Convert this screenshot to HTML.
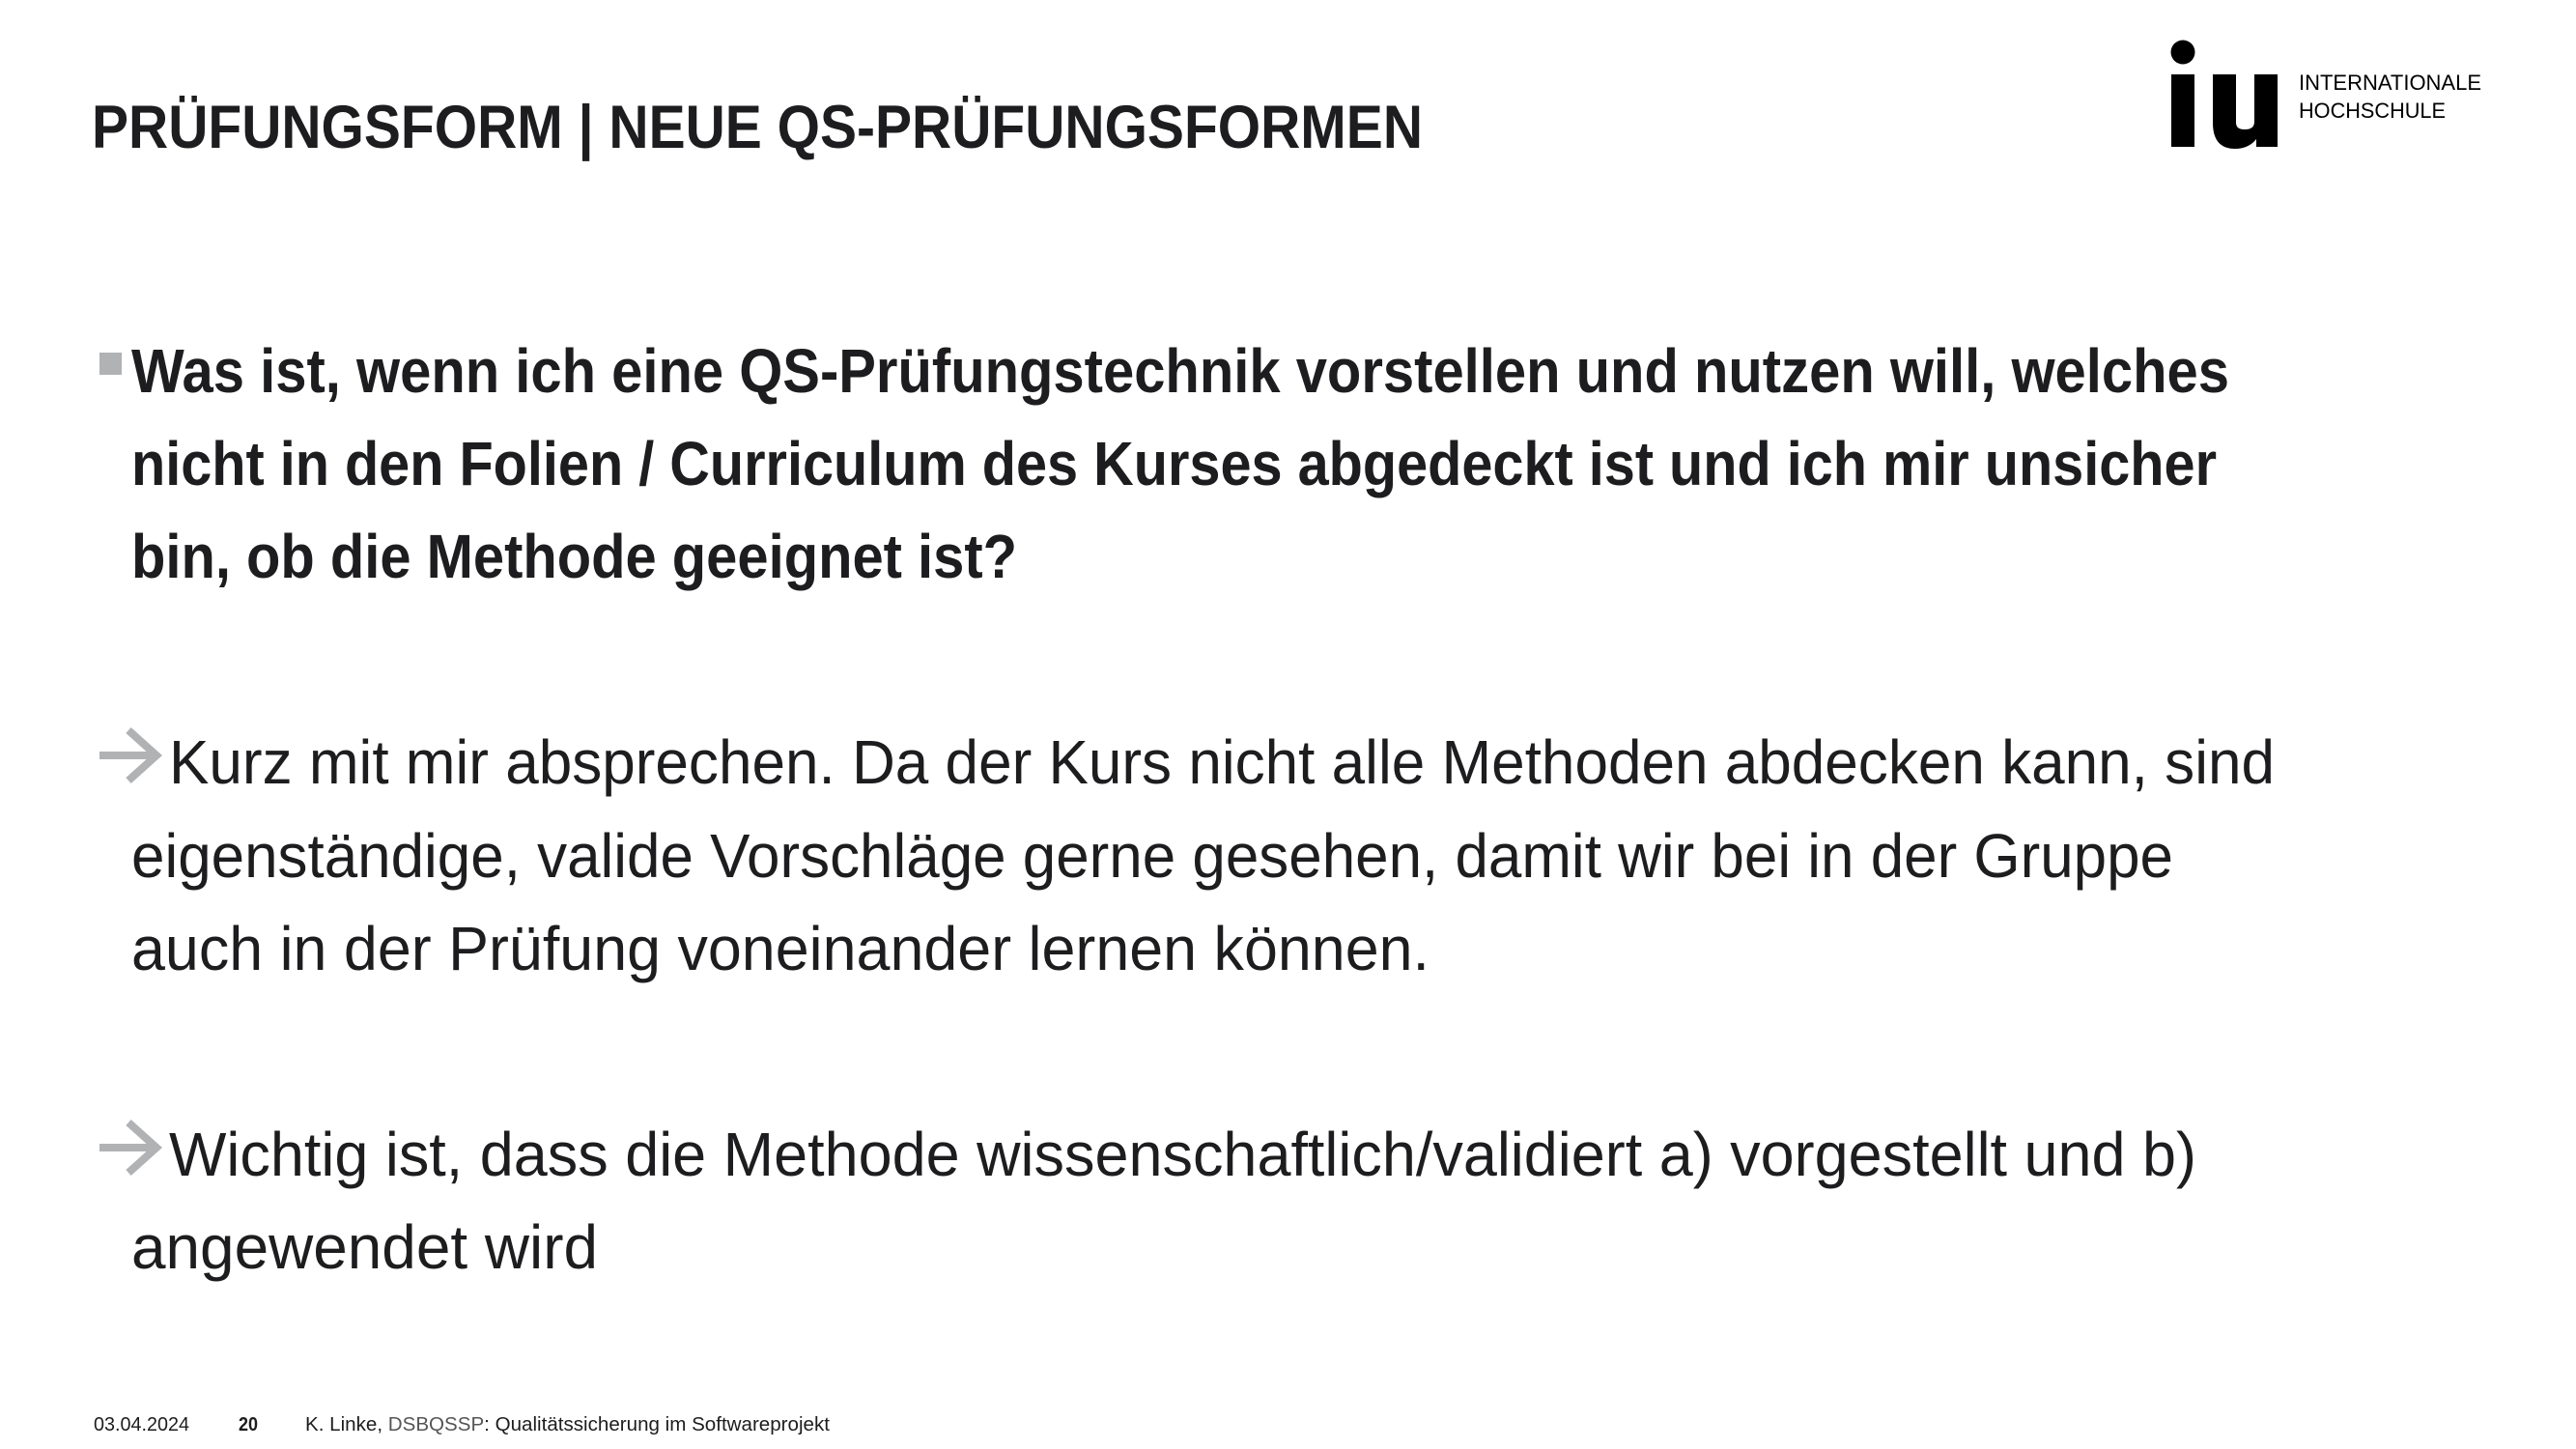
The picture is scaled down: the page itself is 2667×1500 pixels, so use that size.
<!DOCTYPE html>
<html><head><meta charset="utf-8"><style>
html,body{margin:0;padding:0;background:#fff;}
svg{display:block;}
text{font-family:"Liberation Sans",sans-serif;fill:#1d1d1f;}
</style></head><body>
<svg width="2667" height="1500" viewBox="0 0 2667 1500" xmlns="http://www.w3.org/2000/svg">
<rect width="2667" height="1500" fill="#fff"/>
<text x="95" y="153" font-size="63" font-weight="bold" textLength="1378" lengthAdjust="spacingAndGlyphs">PRÜFUNGSFORM | NEUE QS-PRÜFUNGSFORMEN</text>

<!-- logo -->
<circle cx="2260" cy="54" r="12.5" fill="#000"/>
<rect x="2248" y="77" width="24" height="75" fill="#000"/>
<path d="M2291 77 h24 v50 q0 7 9 7 q10 0 10 -8 v-49 h24 v75 h-22 v-8 q-8 10 -22 10 q-23 0 -23 -27 z" fill="#000"/>
<text x="2380" y="93" font-size="22" textLength="189" lengthAdjust="spacingAndGlyphs" style="fill:#000">INTERNATIONALE</text>
<text x="2380" y="122" font-size="22" textLength="152" lengthAdjust="spacingAndGlyphs" style="fill:#000">HOCHSCHULE</text>

<!-- bullet -->
<rect x="103" y="365" width="23" height="23" fill="#b0b2b4"/>
<text x="136" y="406" font-size="64" font-weight="bold" textLength="2172" lengthAdjust="spacingAndGlyphs">Was ist, wenn ich eine QS-Prüfungstechnik vorstellen und nutzen will, welches</text>
<text x="136" y="502" font-size="64" font-weight="bold" textLength="2159" lengthAdjust="spacingAndGlyphs">nicht in den Folien / Curriculum des Kurses abgedeckt ist und ich mir unsicher</text>
<text x="136" y="598" font-size="64" font-weight="bold" textLength="917" lengthAdjust="spacingAndGlyphs">bin, ob die Methode geeignet ist?</text>

<!-- arrow 1 -->
<g stroke="#b0b2b4" stroke-width="8" fill="none">
<path d="M103 782 H160"/>
<path d="M133 756 L162 782 L133 808"/>
</g>
<text x="175" y="811" font-size="64" textLength="2180" lengthAdjust="spacingAndGlyphs">Kurz mit mir absprechen. Da der Kurs nicht alle Methoden abdecken kann, sind</text>
<text x="136" y="908" font-size="64" textLength="2114" lengthAdjust="spacingAndGlyphs">eigenständige, valide Vorschläge gerne gesehen, damit wir bei in der Gruppe</text>
<text x="136" y="1004" font-size="64" textLength="1344" lengthAdjust="spacingAndGlyphs">auch in der Prüfung voneinander lernen können.</text>

<!-- arrow 2 -->
<g stroke="#b0b2b4" stroke-width="8" fill="none">
<path d="M103 1188 H160"/>
<path d="M133 1162 L162 1188 L133 1214"/>
</g>
<text x="175" y="1217" font-size="64" textLength="2099" lengthAdjust="spacingAndGlyphs">Wichtig ist, dass die Methode wissenschaftlich/validiert a) vorgestellt und b)</text>
<text x="136" y="1313" font-size="64" textLength="483" lengthAdjust="spacingAndGlyphs">angewendet wird</text>

<!-- footer -->
<text x="97" y="1481" font-size="20" textLength="99" lengthAdjust="spacingAndGlyphs">03.04.2024</text>
<text x="247" y="1481" font-size="20" font-weight="bold" textLength="20" lengthAdjust="spacingAndGlyphs">20</text>
<text x="316" y="1481" font-size="20" textLength="543" lengthAdjust="spacingAndGlyphs">K. Linke, <tspan style="fill:#555">DSBQSSP</tspan>: Qualitätssicherung im Softwareprojekt</text>
</svg>
</body></html>
